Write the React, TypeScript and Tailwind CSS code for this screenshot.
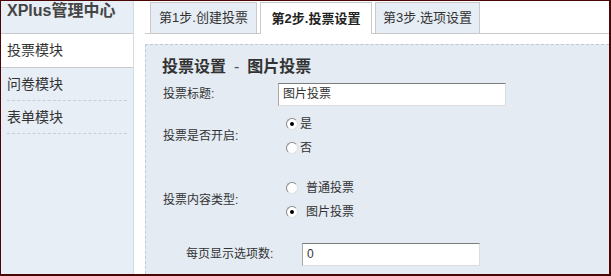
import React from "react";

// XPlus admin — step 2 of the vote wizard (vote settings)

const FONT = { fontFamily: '"Liberation Sans", "Noto Sans CJK SC", sans-serif' };

const MENU = [
  { label: "投票模块", active: true },
  { label: "问卷模块", active: false },
  { label: "表单模块", active: false },
];

const TABS = [
  { label: "第1步.创建投票", active: false, width: "w-[107px]" },
  { label: "第2步.投票设置", active: true, width: "w-[112px]" },
  { label: "第3步.选项设置", active: false, width: "w-[105px]" },
];

function Radio({ checked, label, gap = false }: { checked: boolean; label: string; gap?: boolean }) {
  return (
    <div className="flex h-[24px] items-center">
      <span className="flex h-[12px] w-[12px] items-center justify-center rounded-full border border-t-[#8a8a8a] border-l-[#8a8a8a] border-r-[#e0e0e0] border-b-[#e0e0e0] bg-white">
        {checked && <span className="h-[4px] w-[4px] rounded-full bg-black" />}
      </span>
      <span className={`${gap ? "ml-[8px]" : "ml-[2px]"} text-[12px] text-[#333]`}>{label}</span>
    </div>
  );
}

function TextInput({ value, width }: { value: string; width: string }) {
  return (
    <div
      className={`flex h-[23px] ${width} items-center border border-t-[#7c7c7c] border-l-[#a8a8a8] border-r-[#dcdcdc] border-b-[#dcdcdc] bg-white px-[4px] text-[12px] text-[#333]`}
    >
      {value}
    </div>
  );
}

export default function App() {
  return (
    <div
      className="flex h-[276px] w-[611px] overflow-hidden border-t border-l border-r-2 border-b-2 border-[#4a0606] bg-white"
      style={FONT}
    >
      {/* Sidebar */}
      <aside className="flex w-[133px] shrink-0 flex-col border-r border-[#d3dbe4] bg-[#e7eef6]">
        <div className="h-[33px] border-b border-[#c9c9c9] pl-[6px] pt-[1px] text-[16px] font-bold leading-[18px] text-[#454545]">
          XPlus管理中心
        </div>
        {MENU.map((m) =>
          m.active ? (
            <div
              key={m.label}
              className="flex h-[34px] items-center border-b border-[#c9c9c9] bg-white pl-[6px] text-[14px] text-[#333]"
            >
              {m.label}
            </div>
          ) : (
            <div key={m.label} className="px-[6px]">
              <div className="flex h-[33px] items-center border-b border-dashed border-[#c6ced8] text-[14px] text-[#333]">
                {m.label}
              </div>
            </div>
          )
        )}
      </aside>

      {/* Main */}
      <main className="ml-[11px] flex min-w-0 flex-1 flex-col">
        <div className="flex h-[33px] shrink-0 items-end gap-[3px] border-b border-[#c9c9c9] pl-[5px]">
          {TABS.map((t) =>
            t.active ? (
              <div
                key={t.label}
                className={`-mb-px flex h-[32px] ${t.width} items-center justify-center border border-b-0 border-[#c9c9c9] bg-white text-[13px] font-bold text-[#222]`}
              >
                {t.label}
              </div>
            ) : (
              <div
                key={t.label}
                className={`flex h-[31px] ${t.width} items-center justify-center border border-b-0 border-[#c9c9c9] bg-[#e6edf5] text-[13px] text-[#333]`}
              >
                {t.label}
              </div>
            )
          )}
        </div>

        <section className="mt-[10px] flex-1 border-t border-l border-dashed border-t-[#b8cad8] border-l-[#c2cad3] bg-[#e4ebf3] pl-[16px] pt-[12px]">
          <h1 className="flex h-[20px] items-center text-[16px] font-bold leading-[20px] text-[#333]">
            投票设置
            <span className="mx-[8px] font-normal text-[#555]">-</span>
            图片投票
          </h1>

          <div className="flex h-[34px] items-center">
            <label className="w-[116px] pl-[1px] text-[12px] text-[#333]">投票标题:</label>
            <TextInput value="图片投票" width="w-[228px]" />
          </div>

          <div className="mt-[1px] flex items-center">
            <label className="w-[124px] pl-[1px] text-[12px] text-[#333]">投票是否开启:</label>
            <div>
              <Radio checked label="是" />
              <Radio checked={false} label="否" />
            </div>
          </div>

          <div className="mt-[16px] flex items-center">
            <label className="w-[124px] pl-[1px] text-[12px] text-[#333]">投票内容类型:</label>
            <div>
              <Radio checked={false} gap label="普通投票" />
              <Radio checked gap label="图片投票" />
            </div>
          </div>

          <div className="mt-[13px] flex h-[34px] items-center pl-[24px]">
            <label className="w-[116px] text-[12px] text-[#333]">每页显示选项数:</label>
            <TextInput value="0" width="w-[178px]" />
          </div>
        </section>
      </main>
    </div>
  );
}
